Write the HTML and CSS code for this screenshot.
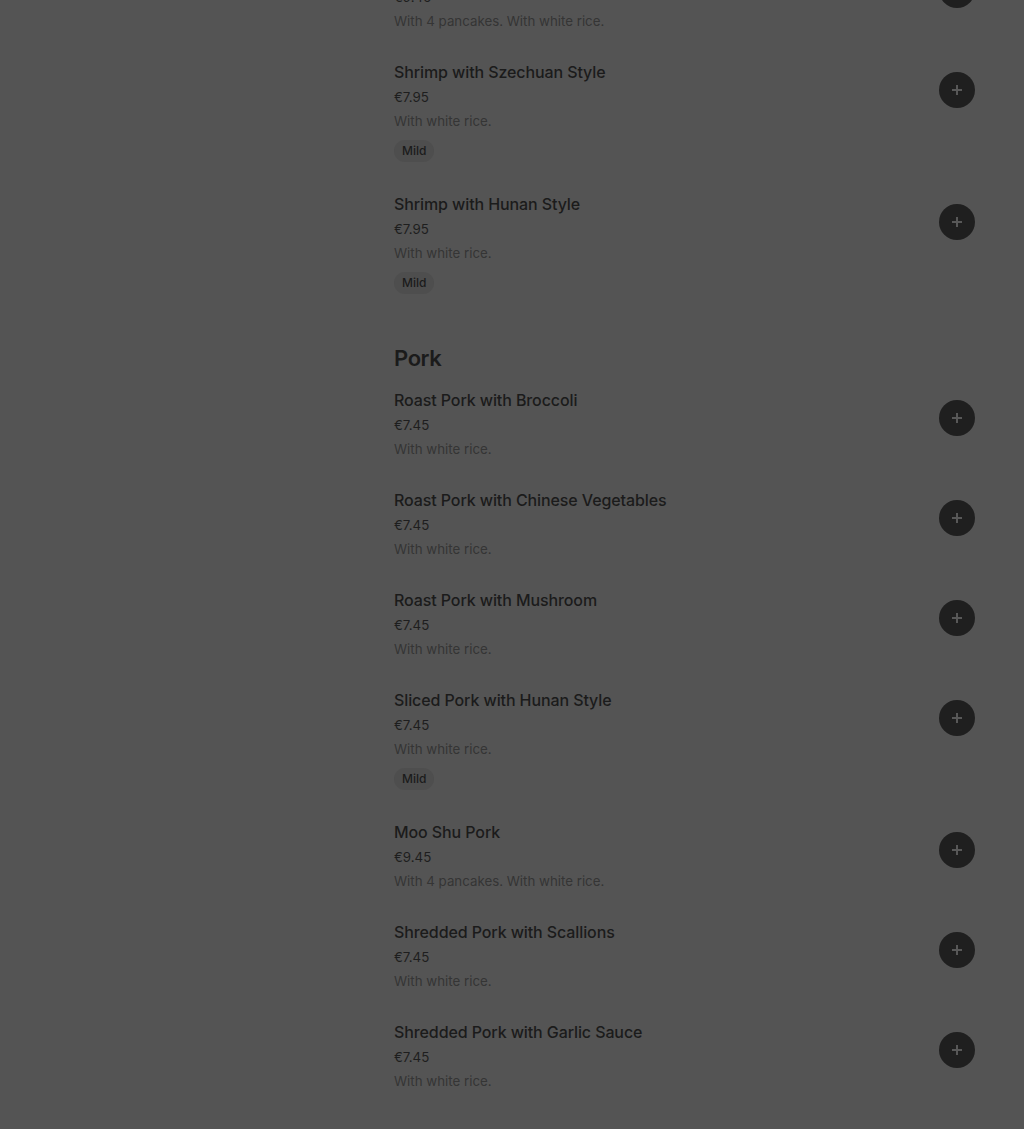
FILE: index.html
```html
<!DOCTYPE html>
<html lang="en">
<head>
<meta charset="utf-8">
<title>Menu</title>
<link rel="stylesheet" href="styles.css">
</head>
<body>
<div class="page">
  <aside class="side"></aside>
  <main class="menu">
    <section class="category">
      <div class="item">
        <div class="info">
          <h3 class="name">Moo Shu Shrimp</h3>
          <div class="price">€9.45</div>
          <div class="desc">With 4 pancakes. With white rice.</div>
        </div>
        <button class="add" aria-label="Add"><svg viewBox="0 0 12 12" width="12" height="12"><path d="M6 1v10M1 6h10" stroke="currentColor" stroke-width="2"/></svg></button>
      </div>
      <div class="item">
        <div class="info">
          <h3 class="name">Shrimp with Szechuan Style</h3>
          <div class="price">€7.95</div>
          <div class="desc">With white rice.</div>
          <span class="tag">Mild</span>
        </div>
        <button class="add" aria-label="Add"><svg viewBox="0 0 12 12" width="12" height="12"><path d="M6 1v10M1 6h10" stroke="currentColor" stroke-width="2"/></svg></button>
      </div>
      <div class="item">
        <div class="info">
          <h3 class="name">Shrimp with Hunan Style</h3>
          <div class="price">€7.95</div>
          <div class="desc">With white rice.</div>
          <span class="tag">Mild</span>
        </div>
        <button class="add" aria-label="Add"><svg viewBox="0 0 12 12" width="12" height="12"><path d="M6 1v10M1 6h10" stroke="currentColor" stroke-width="2"/></svg></button>
      </div>
    </section>
    <section class="category">
      <h2 class="cat-title">Pork</h2>
      <div class="item">
        <div class="info">
          <h3 class="name">Roast Pork with Broccoli</h3>
          <div class="price">€7.45</div>
          <div class="desc">With white rice.</div>
        </div>
        <button class="add" aria-label="Add"><svg viewBox="0 0 12 12" width="12" height="12"><path d="M6 1v10M1 6h10" stroke="currentColor" stroke-width="2"/></svg></button>
      </div>
      <div class="item">
        <div class="info">
          <h3 class="name">Roast Pork with Chinese Vegetables</h3>
          <div class="price">€7.45</div>
          <div class="desc">With white rice.</div>
        </div>
        <button class="add" aria-label="Add"><svg viewBox="0 0 12 12" width="12" height="12"><path d="M6 1v10M1 6h10" stroke="currentColor" stroke-width="2"/></svg></button>
      </div>
      <div class="item">
        <div class="info">
          <h3 class="name">Roast Pork with Mushroom</h3>
          <div class="price">€7.45</div>
          <div class="desc">With white rice.</div>
        </div>
        <button class="add" aria-label="Add"><svg viewBox="0 0 12 12" width="12" height="12"><path d="M6 1v10M1 6h10" stroke="currentColor" stroke-width="2"/></svg></button>
      </div>
      <div class="item">
        <div class="info">
          <h3 class="name">Sliced Pork with Hunan Style</h3>
          <div class="price">€7.45</div>
          <div class="desc">With white rice.</div>
          <span class="tag">Mild</span>
        </div>
        <button class="add" aria-label="Add"><svg viewBox="0 0 12 12" width="12" height="12"><path d="M6 1v10M1 6h10" stroke="currentColor" stroke-width="2"/></svg></button>
      </div>
      <div class="item">
        <div class="info">
          <h3 class="name">Moo Shu Pork</h3>
          <div class="price">€9.45</div>
          <div class="desc">With 4 pancakes. With white rice.</div>
        </div>
        <button class="add" aria-label="Add"><svg viewBox="0 0 12 12" width="12" height="12"><path d="M6 1v10M1 6h10" stroke="currentColor" stroke-width="2"/></svg></button>
      </div>
      <div class="item">
        <div class="info">
          <h3 class="name">Shredded Pork with Scallions</h3>
          <div class="price">€7.45</div>
          <div class="desc">With white rice.</div>
        </div>
        <button class="add" aria-label="Add"><svg viewBox="0 0 12 12" width="12" height="12"><path d="M6 1v10M1 6h10" stroke="currentColor" stroke-width="2"/></svg></button>
      </div>
      <div class="item">
        <div class="info">
          <h3 class="name">Shredded Pork with Garlic Sauce</h3>
          <div class="price">€7.45</div>
          <div class="desc">With white rice.</div>
        </div>
        <button class="add" aria-label="Add"><svg viewBox="0 0 12 12" width="12" height="12"><path d="M6 1v10M1 6h10" stroke="currentColor" stroke-width="2"/></svg></button>
      </div>
    </section>
  </main>
</div>
</body>
</html>
```

FILE: styles.css
```css
html, body {
  margin: 0;
  padding: 0;
  background: #545454;
  height: 100%;
  overflow: hidden;
}
body {
  font-family: Inter, "Noto Sans", "Liberation Sans", sans-serif;
  color: #1b1b1b;
}
.page {
  display: flex;
  margin-top: -40px;
}
.side {
  width: 394px;
  flex: none;
}
.menu {
  width: 581px;
  flex: none;
}
.cat-title {
  margin: 18px 0 14px;
  font-size: 22px;
  line-height: 32px;
  font-weight: 600;
  letter-spacing: -0.4px;
  color: #1b1b1b;
}
.item {
  display: flex;
  justify-content: space-between;
  align-items: flex-start;
  padding-bottom: 27px;
}
.info {
  display: flex;
  flex-direction: column;
  align-items: flex-start;
}
.name {
  margin: 0 0 1px;
  font-size: 16px;
  line-height: 24px;
  font-weight: 500;
  letter-spacing: -0.1px;
  color: #1b1b1b;
}
.price {
  font-size: 13.3px;
  line-height: 24px;
  color: #1e1e1e;
}
.desc {
  font-size: 13.3px;
  line-height: 24px;
  color: #353535;
}
.tag {
  margin: 7px 0 3px;
  height: 22px;
  line-height: 22px;
  padding: 0 8px;
  border-radius: 11px;
  background: #4e4e4e;
  font-size: 12px;
  font-weight: 500;
  color: #1b1b1b;
}
.add {
  margin-top: 12px;
  width: 36px;
  height: 36px;
  border: none;
  border-radius: 50%;
  background: #1f1f1f;
  color: #585858;
  display: flex;
  align-items: center;
  justify-content: center;
  padding: 0;
  flex: none;
}
.add svg {
  display: block;
}
```
